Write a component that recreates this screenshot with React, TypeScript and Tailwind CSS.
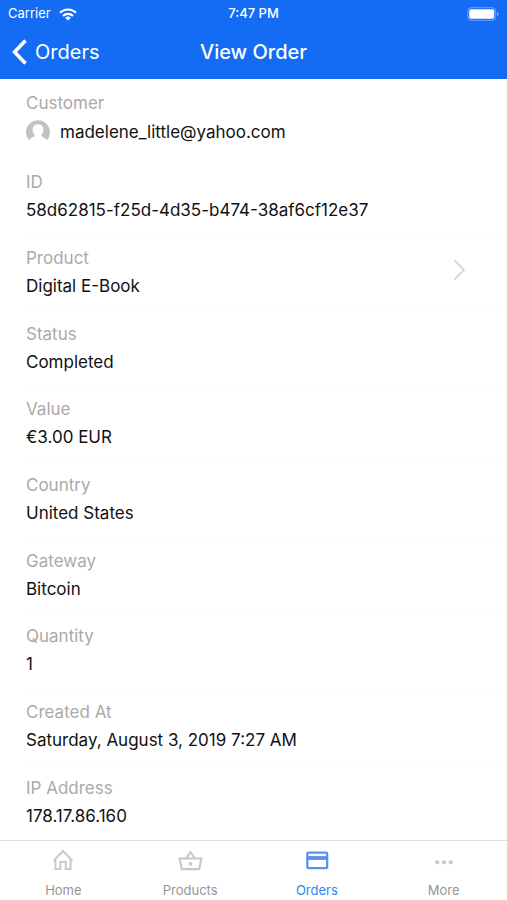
import type { ReactNode } from "react";

type Field = { label: string; value: string; linked?: boolean };

const fields: Field[] = [
  { label: "ID", value: "58d62815-f25d-4d35-b474-38af6cf12e37" },
  { label: "Product", value: "Digital E-Book", linked: true },
  { label: "Status", value: "Completed" },
  { label: "Value", value: "€3.00 EUR" },
  { label: "Country", value: "United States" },
  { label: "Gateway", value: "Bitcoin" },
  { label: "Quantity", value: "1" },
  { label: "Created At", value: "Saturday, August 3, 2019 7:27 AM" },
  { label: "IP Address", value: "178.17.86.160" },
];

function StatusBar() {
  return (
    <div className="grid h-7 grid-cols-3 items-center px-2 text-[13px]">
      <div className="flex items-center gap-2">
        <span>Carrier</span>
        <svg width="18" height="13" viewBox="0 0 18 13" fill="none" stroke="currentColor" strokeWidth="2.2" aria-hidden="true">
          <path d="M1 4.8a11.3 11.3 0 0 1 16 0" />
          <path d="M4 7.9a7 7 0 0 1 10 0" />
          <path d="M9 12.6 6.2 9.9a4 4 0 0 1 5.6 0z" fill="currentColor" stroke="none" />
        </svg>
      </div>
      <span className="text-center font-medium">7:47 PM</span>
      <svg className="justify-self-end" width="32" height="14" viewBox="0 0 32 14" aria-hidden="true">
        <rect x="0.7" y="0.7" width="28" height="12.6" rx="3.6" fill="none" stroke="#fff" strokeOpacity="0.4" />
        <rect x="2.2" y="2.2" width="25" height="9.6" rx="2" fill="#fff" />
        <path d="M30 5v4q1.5-.6 1.5-2T30 5z" fill="#fff" fillOpacity="0.5" />
      </svg>
    </div>
  );
}

function FieldRow({ field }: { field: Field }) {
  return (
    <div className="relative flex flex-1 flex-col justify-center border-b border-[#fcfcfc] last:border-transparent">
      <dt className="text-[17px] leading-7 text-[#aaaaaa]">{field.label}</dt>
      <dd className="text-[17px] leading-7 text-[#111111]">{field.value}</dd>
      {field.linked && (
        <button type="button" aria-label="Open product" className="absolute inset-y-0 right-10 flex items-center pb-1">
          <svg width="14" height="22" viewBox="0 0 14 22" fill="none" stroke="#d6d6d6" strokeWidth="1.8" aria-hidden="true">
            <path d="M1.5 1.5 11 11 1.5 20.5" />
          </svg>
        </button>
      )}
    </div>
  );
}

function Tab({ label, active, children }: { label: string; active?: boolean; children: ReactNode }) {
  return (
    <button
      type="button"
      aria-current={active ? "page" : undefined}
      className={`flex flex-1 flex-col items-center pt-1 text-[13px] leading-5 ${active ? "text-[#2d86f0]" : "text-[#969696]"}`}
    >
      <svg
        className={`mb-2 ${active ? "text-[#5a91f2]" : "text-[#c8c8c8]"}`}
        width="28"
        height="28"
        viewBox="0 0 28 28"
        fill="none"
        stroke="currentColor"
        strokeWidth="2"
        aria-hidden="true"
      >
        {children}
      </svg>
      {label}
    </button>
  );
}

export default function App() {
  return (
    <div className="flex min-h-screen flex-col bg-white font-['Inter','Liberation_Sans',sans-serif]">
      <header className="bg-[#146bf4] text-white">
        <StatusBar />
        <div className="grid h-[51px] grid-cols-[1fr_auto_1fr] items-center px-3 pb-1">
          <button type="button" className="flex items-center gap-2 justify-self-start text-xl">
            <svg width="15" height="26" viewBox="0 0 15 26" fill="none" stroke="currentColor" strokeWidth="3.6" aria-hidden="true">
              <path d="M13.5 1.5 2.6 13l10.9 11.5" />
            </svg>
            Orders
          </button>
          <h1 className="text-xl font-medium">View Order</h1>
        </div>
      </header>

      <main className="flex flex-1">
        <dl className="flex flex-1 flex-col pl-[26px]">
          <div className="pt-2.5 pb-3">
            <dt className="text-[17px] leading-7 text-[#aaaaaa]">Customer</dt>
            <dd className="flex items-center gap-2.5 text-[17px] leading-[30px] text-[#111111]">
              <svg width="24" height="24" viewBox="0 0 24 24" aria-hidden="true">
                <path
                  d="M3.2 20.4A12 12 0 1 1 20.8 20.4C19.8 18.2 17.4 17.2 15.8 16.5c-.7-.4-.5-1.5 0-2.2C17.5 12.3 17.7 10 17 7.6C16.3 5.3 14.4 4.3 12 4.3S7.7 5.3 7 7.6C6.3 10 6.5 12.3 8.200 14.3c.5.7.7 1.8 0 2.2-1.6.7-4 1.7-5 3.9z"
                  fill="#c2c2c2"
                />
              </svg>
              madelene_little@yahoo.com
            </dd>
          </div>
          {fields.map((field) => (
            <FieldRow key={field.label} field={field} />
          ))}
        </dl>
      </main>

      <nav className="flex h-[60px] border-t border-[#dedede]">
        <Tab label="Home">
          <path d="m4.2 16.5 9.8-10.3 9.8 10.3M6.200 14.7V25h5v-7.500h5.600V25h5V14.7" />
        </Tab>
        <Tab label="Products">
          <path d="M3.200 14h22.600L23.500 25h-18zM9.800 14 14.500 7.500l4.700 6.500" strokeWidth="2.200" />
          <circle cx="14.500" cy="19.500" r="2" fill="currentColor" stroke="none" />
        </Tab>
        <Tab label="Orders" active>
          <rect x="4" y="8" width="20.500" height="16" rx="1" strokeWidth="2.400" />
          <path d="M4 13.500h20.500" strokeWidth="4" />
        </Tab>
        <Tab label="More">
          <g fill="currentColor" stroke="none">
            <circle cx="7" cy="18" r="2.200" />
            <circle cx="14" cy="18" r="2.200" />
            <circle cx="21" cy="18" r="2.200" />
          </g>
        </Tab>
      </nav>
    </div>
  );
}
